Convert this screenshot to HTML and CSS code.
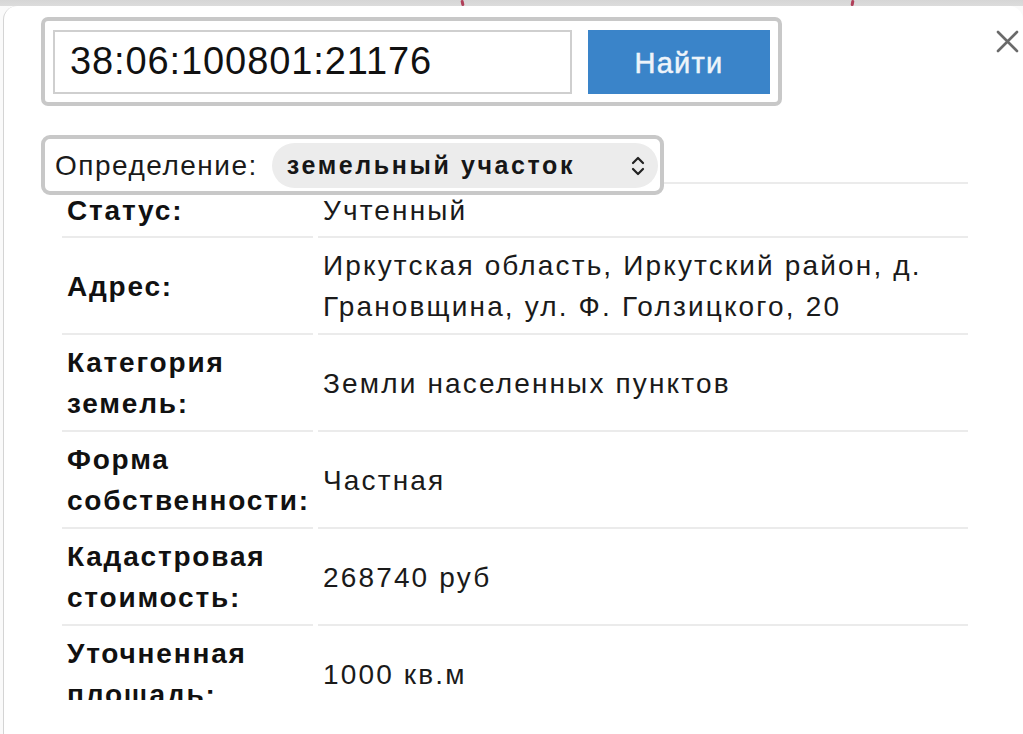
FILE: index.html
```html
<!DOCTYPE html>
<html lang="ru">
<head>
<meta charset="utf-8">
<title>Кадастровый номер</title>
<link rel="stylesheet" href="styles.css">
</head>
<body>
<div class="screen">
  <span class="map-line map-line-a"></span>
  <span class="map-line map-line-b"></span>
  <div class="panel">
    <button class="close" aria-label="Закрыть">
      <svg width="23" height="23" viewBox="0 0 23 23"><path d="M2 2 L21 21 M21 2 L2 21" stroke="#6a6a6a" stroke-width="2.6" stroke-linecap="round"/></svg>
    </button>
    <div class="search">
      <div class="search-input">38:06:100801:21176</div>
      <button class="search-btn">Найти</button>
    </div>
    <div class="kind">
      <span class="kind-label">Определение:</span>
      <div class="kind-select">
        <span>земельный участок</span>
        <svg class="chev" width="14" height="22" viewBox="0 0 14 22"><path d="M2 8 L7 3 L12 8 M2 14 L7 19 L12 14" fill="none" stroke="#222" stroke-width="2.2" stroke-linecap="round" stroke-linejoin="round"/></svg>
      </div>
    </div>
    <div class="info-wrap">
      <div class="info">
        <div class="k first">Статус:</div><div class="v first">Учтенный</div>
        <div class="k">Адрес:</div><div class="v">Иркутская область, Иркутский район, д. Грановщина, ул. Ф. Голзицкого, 20</div>
        <div class="k">Категория земель:</div><div class="v">Земли населенных пунктов</div>
        <div class="k">Форма собственности:</div><div class="v">Частная</div>
        <div class="k">Кадастровая стоимость:</div><div class="v">268740 руб</div>
        <div class="k">Уточненная площадь:</div><div class="v">1000 кв.м</div>
      </div>
    </div>
  </div>
</div>
</body>
</html>
```
FILE: styles.css
```css
html, body {
  margin: 0;
  padding: 0;
}
body {
  font-family: "Liberation Sans", Arial, sans-serif;
  color: #111;
  background: #ffffff;
}
.screen {
  position: relative;
  height: 734px;
  overflow: hidden;
  background: linear-gradient(#d6d6d6 0, #dcdcdc 6px, #fafafa 6px);
  padding: 6px 0 0 3px;
  box-sizing: border-box;
}
.map-line {
  position: absolute;
  top: 0;
  width: 3px;
  height: 6px;
  background: #b0405a;
  border-radius: 2px;
}
.map-line-a { left: 461px; transform: rotate(-12deg); }
.map-line-b { left: 851px; transform: rotate(10deg); }

.panel {
  position: relative;
  height: 728px;
  background: #ffffff;
  border-left: 1px solid #d4d4d4;
  border-radius: 14px 14px 0 0;
  padding: 11px 0 0 37px;
  box-sizing: border-box;
}
.close {
  position: absolute;
  top: 24px;
  right: 4px;
  width: 23px;
  height: 23px;
  padding: 0;
  border: 0;
  background: none;
}
.close svg { display: block; }

.search {
  display: inline-flex;
  gap: 16px;
  padding: 9px 8px 8px 8px;
  border: 4px solid #c8c8c8;
  border-radius: 7px;
  background: #fff;
}
.search-input {
  width: 519px;
  height: 64px;
  box-sizing: border-box;
  border: 2px solid #cfcfcf;
  padding: 0 0 0 15px;
  font-size: 38px;
  line-height: 58px;
  color: #111;
  letter-spacing: 0.9px;
}
.search-btn {
  width: 182px;
  height: 64px;
  border: 0;
  background: #3a84c9;
  color: #eef4fa;
  font-family: "Liberation Sans", Arial, sans-serif;
  font-size: 29px;
  font-weight: normal;
  letter-spacing: 1.2px;
  padding: 2px 0 0 0;
  -webkit-text-stroke: 0.5px #eef4fa;
}

.kind {
  position: relative;
  z-index: 1;
  display: flex;
  align-items: center;
  gap: 14px;
  width: 623px;
  box-sizing: border-box;
  margin-top: 29px;
  margin-bottom: -13px;
  padding: 4px 2px 3px 10px;
  border: 4px solid #c8c8c8;
  border-radius: 9px;
  background: #fff;
}
.kind-label {
  font-size: 28px;
  letter-spacing: 1.5px;
  color: #1a1a1a;
  white-space: nowrap;
}
.kind-select {
  flex: 1;
  height: 45px;
  display: flex;
  align-items: center;
  justify-content: space-between;
  padding: 0 13px 0 15px;
  border-radius: 23px;
  background: #ececec;
  font-size: 25px;
  font-weight: bold;
  letter-spacing: 2.6px;
  color: #161616;
}
.chev { display: block; }

.info-wrap {
  margin-left: 21px;
  width: 906px;
  height: 518px;
  overflow: hidden;
}
.info {
  display: grid;
  grid-template-columns: 251px 650px;
  column-gap: 5px;
}
.k, .v {
  display: flex;
  align-items: center;
  padding: 7px 0 6px 5px;
  border-bottom: 2px solid #ebebeb;
  line-height: 41px;
  font-size: 28px;
}
.k.first, .v.first {
  border-top: 2px solid #ebebeb;
  padding-top: 6px;
  padding-bottom: 5px;
}
.k {
  font-weight: bold;
  letter-spacing: 1.8px;
  color: #111;
}
.v {
  letter-spacing: 2.15px;
  color: #1a1a1a;
}
```
